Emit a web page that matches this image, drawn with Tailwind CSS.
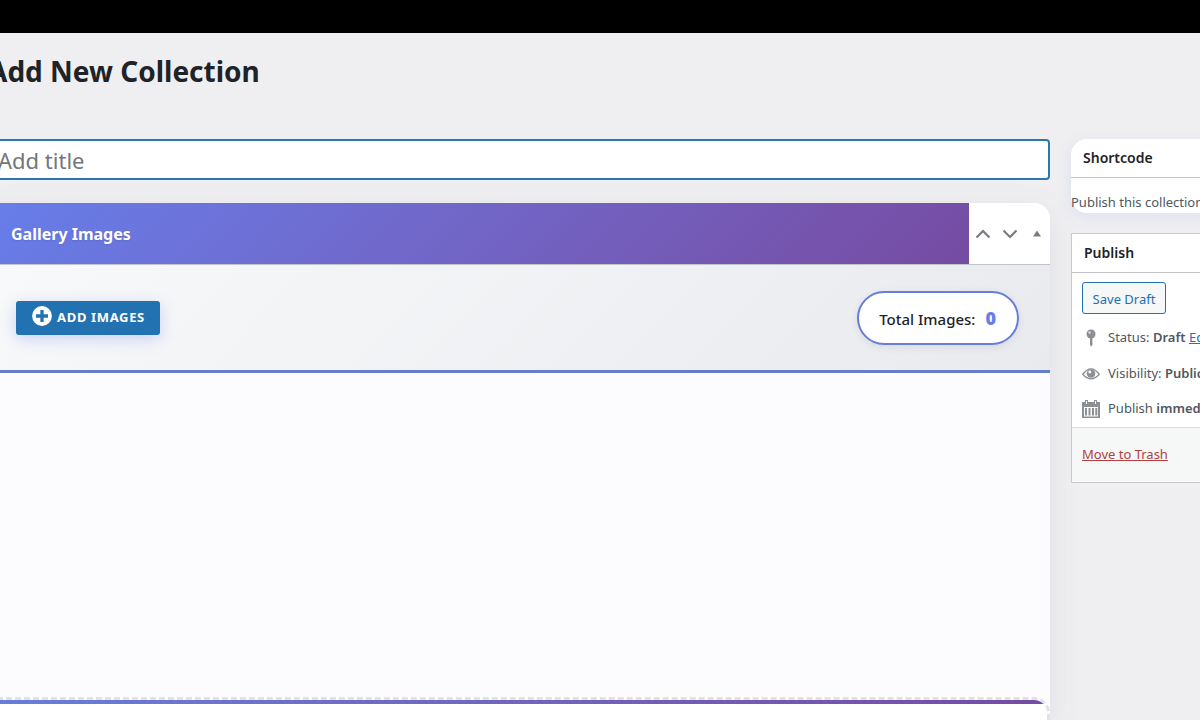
<!DOCTYPE html>
<html lang="en">
  <head>
    <title>Add New Collection</title>
    <meta charset="utf-8" />
    <meta name="viewport" content="width=device-width, initial-scale=1.0" />
    <script src="https://cdn.jsdelivr.net/npm/@tailwindcss/browser@4"></script>
  </head>
  <body class="flex h-screen flex-col overflow-hidden bg-[#efeff1] font-['Noto_Sans',sans-serif] text-[13px] text-[#50575e]">
    <div class="h-[33px] shrink-0 bg-black"></div>
    <main class="-ml-3 flex min-h-0 flex-1 flex-col">
      <h1 class="mt-5 text-[28px] leading-9 font-bold text-[#1d2327]">Add New Collection</h1>

      <div class="mt-[50px] flex min-h-0 flex-1 gap-[21px]">
        <div class="flex min-w-0 flex-1 flex-col">
          <label for="title" class="sr-only">Add title</label>
          <input
            id="title"
            type="text"
            placeholder="Add title"
            class="h-[41px] w-full shrink-0 rounded border-2 border-[#2f75ae] bg-white px-2 text-[22px] text-[#2c3338] outline-none placeholder:text-[#72777c]"
          />

          <section class="mt-[23px] flex min-h-0 flex-1 flex-col overflow-hidden rounded-tr-2xl bg-[#fcfcff] shadow-[0_8px_32px_rgba(100,100,140,0.1)]">
            <div class="flex h-[62px] shrink-0 border-b border-[#c3c4c7] bg-white">
              <h2 class="flex flex-1 items-center bg-linear-135 from-[#667eea] to-[#764ba2] pl-[23px] text-base font-bold text-white [text-shadow:0_1px_2px_rgba(0,0,0,0.1)]">
                Gallery Images
              </h2>
              <div class="flex w-[81px] items-center text-[#787c82]">
                <button type="button" aria-label="Move up" class="flex w-[27px] justify-center">
                  <svg class="size-4" viewBox="0 0 16 16" fill="none" stroke="currentColor" stroke-width="2.2"><path d="M1.5 11.5 8 5l6.5 6.5" /></svg>
                </button>
                <button type="button" aria-label="Move down" class="flex w-[27px] justify-center">
                  <svg class="size-4" viewBox="0 0 16 16" fill="none" stroke="currentColor" stroke-width="2.2"><path d="M1.5 4.5 8 11l6.5-6.5" /></svg>
                </button>
                <button type="button" aria-label="Toggle panel" class="flex w-[27px] justify-center">
                  <svg class="size-4" viewBox="0 0 16 16" fill="currentColor"><path d="M4 10.500 8 4.500l4 6z" /></svg>
                </button>
              </div>
            </div>

            <div class="flex h-[108px] shrink-0 items-center justify-between border-b-3 border-[#667eca] bg-linear-135 from-[#f8f9fa] to-[#e9eaee] pr-[31px] pl-7">
              <button type="button" class="flex h-[34px] w-36 items-center justify-center gap-1 rounded-[3px] bg-[#2271b1] text-[13px] font-bold tracking-wider text-white shadow-[0_4px_15px_rgba(102,126,234,0.3)]">
                <svg class="mb-1 size-[22px]" viewBox="0 0 20 20">
                  <circle cx="10" cy="10" r="9" fill="#fff" />
                  <path d="M10 4.5v11M4.5 10h11" stroke="#2271b1" stroke-width="3" />
                </svg>
                ADD IMAGES
              </button>
              <p class="flex h-[54px] items-center gap-[10px] rounded-full border-2 border-[#667eda] bg-white pr-[21px] pl-5 text-[15px] font-medium text-[#1d2327] shadow-[0_2px_8px_rgba(0,0,0,0.08)]">
                <span class="pt-1">Total Images:</span>
                <span class="text-lg font-black text-[#667eea]">0</span>
              </p>
            </div>

            <div class="flex-1"></div>

            <div class="h-[23px] shrink-0 overflow-hidden rounded-tr-2xl border-t-3 border-r-3 border-dashed border-[#e2e2e6] bg-white">
              <div class="h-1 bg-linear-to-r from-[#667eda] to-[#764ba2]"></div>
            </div>
          </section>
        </div>

        <aside class="w-[129px] shrink-0">
          <section class="w-[280px] rounded-2xl bg-white shadow-[0_4px_16px_rgba(102,126,234,0.12)]">
            <h2 class="flex h-[39px] items-center border-b border-[#c3c4c7] px-3 text-sm font-semibold text-[#1d2327]">Shortcode</h2>
            <p class="pt-[14px] pb-px leading-5 whitespace-nowrap">Publish this collection to get the shortcode.</p>
          </section>

          <section class="mt-5 w-[280px] border border-[#c9cacd] bg-white">
            <h2 class="flex h-[39px] items-center border-b border-[#c3c4c7] px-3 text-sm font-semibold text-[#1d2327]">Publish</h2>
            <div class="px-[10px] pt-[9px]">
              <button type="button" class="h-8 w-[84px] rounded-[3px] border border-[#2271b1] bg-[#f6f7f7] pt-[3px] text-[#2271b1]">Save Draft</button>
              <ul class="mt-[6px] whitespace-nowrap">
                <li class="flex h-9 items-center gap-2">
                  <svg class="size-[18px] text-[#8c8f94]" viewBox="0 0 18 18" fill="currentColor">
                    <circle cx="9" cy="5" r="4.5" />
                    <path d="M8 9h2.4v7L9.2 17.500 8 16z" />
                    <circle cx="7.600" cy="3.600" r="1.300" fill="#d5d6d8" />
                  </svg>
                  <span>Status: <b class="font-semibold">Draft</b> <a href="#" class="text-[#2271b1] underline">Edit</a></span>
                </li>
                <li class="flex h-[35px] items-center gap-2">
                  <svg class="size-[18px] text-[#8c8f94]" viewBox="0 0 18 18">
                    <path d="M.7 9.300Q9-1.500 17.300 9.300 9 18.500.7 9.300z" fill="none" stroke="currentColor" stroke-width="1.400" />
                    <circle cx="9" cy="8.500" r="4.300" fill="currentColor" />
                    <circle cx="7.800" cy="7" r="1.400" fill="#fff" />
                  </svg>
                  <span>Visibility: <b class="font-semibold">Public</b> <a href="#" class="text-[#2271b1] underline">Edit</a></span>
                </li>
                <li class="flex h-9 items-center gap-2">
                  <svg class="size-[18px] text-[#8c8f94]" viewBox="0 0 18 18" fill="currentColor">
                    <path d="M3 0h3v2h6V0h3v2h3v16H0V2h3z" />
                    <path d="M2 7h14v9.500H2z" fill="#fff" />
                    <path d="M3 8h2v7.500H3zM6.500 8h2v7.500h-2zM10 8h2v7.500h-2zM13.300 8h2v7.500h-2z" />
                    <path d="M4 1h1v3H4zM13 1h1v3h-1z" fill="#fff" />
                  </svg>
                  <span>Publish <b class="font-semibold">immediately</b> <a href="#" class="text-[#2271b1] underline">Edit</a></span>
                </li>
              </ul>
            </div>
            <div class="flex h-[55px] items-center border-t border-[#dcdcde] bg-[#f6f7f7] px-[10px]">
              <a href="#" class="text-[#b0413f] underline">Move to Trash</a>
            </div>
          </section>
        </aside>
      </div>
    </main>
  </body>
</html>
